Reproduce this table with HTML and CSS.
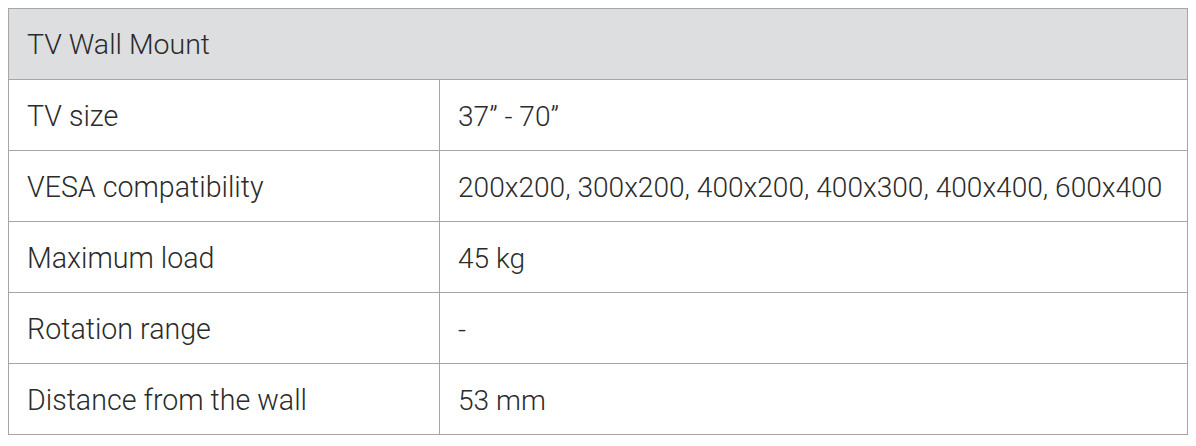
FILE: index.html
```html
<!DOCTYPE html>
<html>
<head>
<meta charset="utf-8">
<link rel="stylesheet" href="styles.css">
</head>
<body>
<table class="spec">
  <thead>
    <tr><th colspan="2">TV Wall Mount</th></tr>
  </thead>
  <tbody>
    <tr><td class="label">TV size</td><td>37” - 70”</td></tr>
    <tr><td class="label">VESA compatibility</td><td>200x200, 300x200, 400x200, 400x300, 400x400, 600x400</td></tr>
    <tr><td class="label">Maximum load</td><td>45 kg</td></tr>
    <tr><td class="label">Rotation range</td><td>-</td></tr>
    <tr><td class="label">Distance from the wall</td><td>53 mm</td></tr>
  </tbody>
</table>
</body>
</html>
```
FILE: styles.css
```css
html, body { margin: 0; padding: 0; background: #fff; }
body { padding: 8px; }
.spec {
  border-collapse: collapse;
  width: 1180px;
  font-family: Roboto, "Liberation Sans", sans-serif;
  font-weight: 300;
  font-size: 28.1px;
  color: #2b2b2b;
}
.spec th, .spec td {
  border: 1px solid #a6a6a6;
  padding: 3px 18px 0;
  text-align: left;
  font-weight: 300;
  box-sizing: border-box;
  line-height: 1.2;
}
.spec th { background: #dcdedf; height: 71px; font-size: 28.5px; }
.spec td { height: 71px; }
.spec .label { width: 431px; font-size: 28.6px; }
```
